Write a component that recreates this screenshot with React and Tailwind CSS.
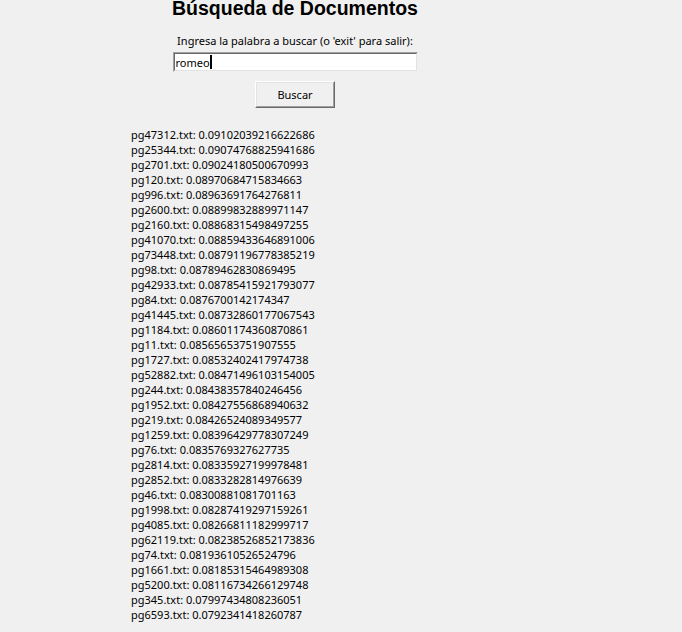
const results = [
  ['pg47312.txt', '0.09102039216622686'],
  ['pg25344.txt', '0.09074768825941686'],
  ['pg2701.txt', '0.09024180500670993'],
  ['pg120.txt', '0.08970684715834663'],
  ['pg996.txt', '0.08963691764276811'],
  ['pg2600.txt', '0.08899832889971147'],
  ['pg2160.txt', '0.08868315498497255'],
  ['pg41070.txt', '0.08859433646891006'],
  ['pg73448.txt', '0.08791196778385219'],
  ['pg98.txt', '0.08789462830869495'],
  ['pg42933.txt', '0.08785415921793077'],
  ['pg84.txt', '0.0876700142174347'],
  ['pg41445.txt', '0.08732860177067543'],
  ['pg1184.txt', '0.08601174360870861'],
  ['pg11.txt', '0.08565653751907555'],
  ['pg1727.txt', '0.08532402417974738'],
  ['pg52882.txt', '0.08471496103154005'],
  ['pg244.txt', '0.08438357840246456'],
  ['pg1952.txt', '0.08427556868940632'],
  ['pg219.txt', '0.08426524089349577'],
  ['pg1259.txt', '0.08396429778307249'],
  ['pg76.txt', '0.0835769327627735'],
  ['pg2814.txt', '0.08335927199978481'],
  ['pg2852.txt', '0.0833282814976639'],
  ['pg46.txt', '0.08300881081701163'],
  ['pg1998.txt', '0.08287419297159261'],
  ['pg4085.txt', '0.08266811182999717'],
  ['pg62119.txt', '0.08238526852173836'],
  ['pg74.txt', '0.08193610526524796'],
  ['pg1661.txt', '0.08185315464989308'],
  ['pg5200.txt', '0.08116734266129748'],
  ['pg345.txt', '0.07997434808236051'],
  ['pg6593.txt', '0.0792341418260787'],
];

export default function App() {
  return (
    <div className="w-[682px] h-[632px] overflow-hidden bg-[#f0f0f0] text-black font-['Noto_Sans',sans-serif]">
      {/* search form, centred on its own frame */}
      <div className="w-[590px] flex flex-col items-center">
        <h1 className="-mt-[3px] text-[19.5px] leading-[22px] font-bold font-['Liberation_Sans',Arial,sans-serif]">
          Búsqueda de Documentos
        </h1>
        <label className="mt-[14px] text-[11px] leading-[15px]">
          Ingresa la palabra a buscar (o 'exit' para salir):
        </label>
        <div className="mt-[4px] w-[245px] h-[20px] bg-white border-t border-l border-t-[#a0a0a0] border-l-[#a0a0a0] border-b border-r border-b-[#f0f0f0] border-r-[#f0f0f0]">
          <div className="h-full border-t border-l border-t-[#696969] border-l-[#696969] border-b border-r border-b-[#e3e3e3] border-r-[#e3e3e3] flex items-center pl-[1px]">
            <span className="text-[11px] leading-[15px]">romeo</span>
            <span className="w-[2px] h-[14px] bg-black" />
          </div>
        </div>
        <button className="mt-[9px] w-[80px] h-[27px] bg-[#f0f0f0] border border-t-white border-l-white border-b-[#696969] border-r-[#696969] text-[11px] leading-[15px]">
          <div className="h-full flex items-center justify-center border border-t-[#e3e3e3] border-l-[#e3e3e3] border-b-[#a0a0a0] border-r-[#a0a0a0]">
            Buscar
          </div>
        </button>
      </div>

      {/* results */}
      <div className="mt-[19px] pl-[131px] text-[11px] leading-[15px]">
        {results.map(([name, score]) => (
          <div key={name}>
            {name}: {score}
          </div>
        ))}
      </div>
    </div>
  );
}
